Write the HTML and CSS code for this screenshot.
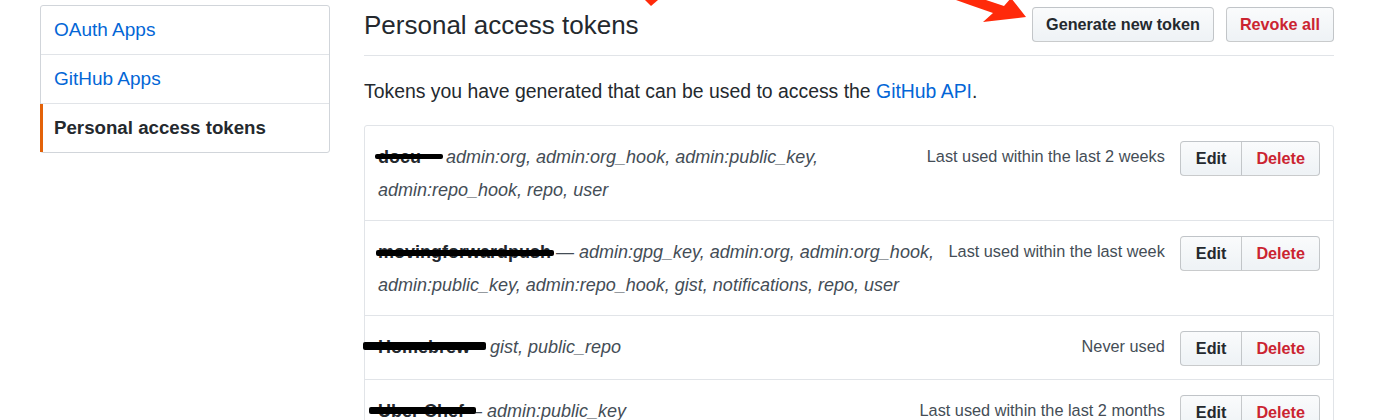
FILE: index.html
```html
<!DOCTYPE html>
<html>
  <head>
    <meta name="viewport" content="width=device-width, initial-scale=1.0">
    <title>Personal access tokens</title>
    <link rel="stylesheet" href="styles.css">
  </head>

  <body>
    <div class="page">
      <!-- Settings side menu -->
      <nav class="menu">
        <a class="menu-item" href="#">OAuth Apps</a>
        <a class="menu-item" href="#">GitHub Apps</a>
        <a class="menu-item selected" href="#">Personal access tokens</a>
      </nav>

      <div class="content">
        <div class="subhead">
          <h2 class="subhead-heading">Personal access tokens</h2>
          <div class="subhead-actions">
            <a class="btn" href="#">Generate new token</a>
            <a class="btn btn-danger" href="#">Revoke all</a>
          </div>
        </div>

        <p class="intro">Tokens you have generated that can be used to access the <a href="#">GitHub API</a>.</p>

        <!-- Token list -->
        <div class="token-list">
          <div class="token">
            <div class="token-desc">
              <strong class="redact redact-docu">docu</strong>
              <em>admin:org, admin:org_hook, admin:public_key, admin:repo_hook, repo, user</em>
            </div>
            <span class="token-meta">Last used within the last 2 weeks</span>
            <div class="btn-group">
              <a class="btn" href="#">Edit</a><a class="btn btn-danger" href="#">Delete</a>
            </div>
          </div>

          <div class="token">
            <div class="token-desc">
              <strong class="redact redact-long">movingforwardpush</strong> — <em>admin:gpg_key, admin:org, admin:org_hook, admin:public_key, admin:repo_hook, gist, notifications, repo, user</em>
            </div>
            <span class="token-meta">Last used within the last week</span>
            <div class="btn-group">
              <a class="btn" href="#">Edit</a><a class="btn btn-danger" href="#">Delete</a>
            </div>
          </div>

          <div class="token">
            <div class="token-desc">
              <strong class="redact redact-wide">Homebrew</strong> – <em>gist, public_repo</em>
            </div>
            <span class="token-meta">Never used</span>
            <div class="btn-group">
              <a class="btn" href="#">Edit</a><a class="btn btn-danger" href="#">Delete</a>
            </div>
          </div>

          <div class="token">
            <div class="token-desc">
              <strong class="redact redact-mid">Uber Chef</strong> – <em>admin:public_key</em>
            </div>
            <span class="token-meta">Last used within the last 2 months</span>
            <div class="btn-group">
              <a class="btn" href="#">Edit</a><a class="btn btn-danger" href="#">Delete</a>
            </div>
          </div>
        </div>
      </div>
    </div>

    <!-- Red annotation arrows drawn over the screenshot -->
    <svg class="annotation" width="1400" height="40" viewBox="0 0 1400 40">
      <polygon points="645,0 658,0 651,6" fill="#ff2a0a"/>
      <polygon points="956,0 986,0 1004,6 1011,-2 1026,17 983,22 993,13 970,5" fill="#ff2a0a"/>
    </svg>
  </body>
</html>
```

FILE: styles.css
```css
/* Base */
html, body {
  margin: 0;
  height: 100%;
  overflow: hidden;
  background: #fff;
}

body {
  font-family: "Liberation Sans", Arial, sans-serif;
  color: #24292e;
}

a {
  color: #0366d6;
  text-decoration: none;
}

/* Layout */
.page {
  display: flex;
  gap: 34px;
  padding: 5px 0 0 40px;
}

/* Side menu */
.menu {
  width: 290px;
  box-sizing: border-box;
  align-self: flex-start;
  border: 1px solid #d1d5da;
  border-radius: 3px;
  display: flex;
  flex-direction: column;
}

.menu-item {
  display: block;
  padding: 13px 13px;
  font-size: 19px;
  line-height: 22px;
  border-bottom: 1px solid #e1e4e8;
}

.menu-item:last-child {
  border-bottom: none;
}

.menu-item.selected {
  color: #24292e;
  font-weight: bold;
  font-size: 18.7px;
  margin-left: -1px;
  padding-left: 11px;
  border-left: 3px solid #e36209;
}

/* Main column */
.content {
  width: 970px;
}

.subhead {
  display: flex;
  align-items: center;
  padding: 2px 0 13px;
  border-bottom: 1px solid #e1e4e8;
}

.subhead-heading {
  flex: 1;
  margin: 0;
  font-size: 26px;
  font-weight: normal;
  line-height: 1;
}

.subhead-actions {
  display: flex;
  gap: 12px;
}

.intro {
  margin: 21px 0 20px;
  font-size: 19.4px;
  line-height: 28px;
}

/* Buttons */
.btn {
  display: inline-block;
  padding: 6px 13px;
  font-size: 16.2px;
  font-weight: bold;
  line-height: 21px;
  color: #24292e;
  border: 1px solid rgba(27, 31, 35, 0.22);
  border-radius: 4px;
  background-image: linear-gradient(-180deg, #fafbfc 0%, #eff3f6 90%);
  white-space: nowrap;
}

.btn-danger {
  color: #cb2431;
}

.btn-group {
  display: flex;
  flex-shrink: 0;
}

.btn-group .btn {
  padding: 6px 15px;
  border-radius: 0;
}

.btn-group .btn:first-child {
  border-radius: 4px 0 0 4px;
}

.btn-group .btn + .btn {
  margin-left: -1px;
  padding: 6px 14px;
  border-radius: 0 4px 4px 0;
}

/* Token list */
.token-list {
  border: 1px solid #e1e4e8;
  border-radius: 3px;
}

.token {
  display: flex;
  align-items: flex-start;
  padding: 15px 13px 13px;
  border-top: 1px solid #e1e4e8;
}

.token:first-child {
  border-top: none;
}

.token-desc {
  flex: 1;
  font-size: 18px;
  line-height: 33px;
  color: #444d56;
}

.token-desc em {
  color: #444d56;
}

.token-desc strong {
  color: #24292e;
}

.token-meta {
  margin: 0 15px 0 8px;
  font-size: 16.3px;
  line-height: 31px;
  color: #444d56;
  white-space: nowrap;
}

/* Black marker over the token names */
.redact {
  position: relative;
}

.redact::after {
  content: "";
  position: absolute;
  left: -3px;
  right: -2px;
  top: 7px;
  height: 5px;
  background: #000;
  border-radius: 2px;
}

.redact-docu {
  padding-right: 20px;
}

.redact-long::after {
  left: -2px;
  right: -3px;
  top: 8px;
  height: 6px;
}

.redact-wide::after {
  left: -15px;
  right: -16px;
  top: 5px;
  height: 8px;
}

.redact-mid {
  margin-right: 3px;
}

.redact-mid::after {
  left: -9px;
  right: -12px;
  top: 6px;
  height: 7px;
}

/* Annotation arrows */
.annotation {
  position: absolute;
  left: 0;
  top: 0;
  pointer-events: none;
}
```
